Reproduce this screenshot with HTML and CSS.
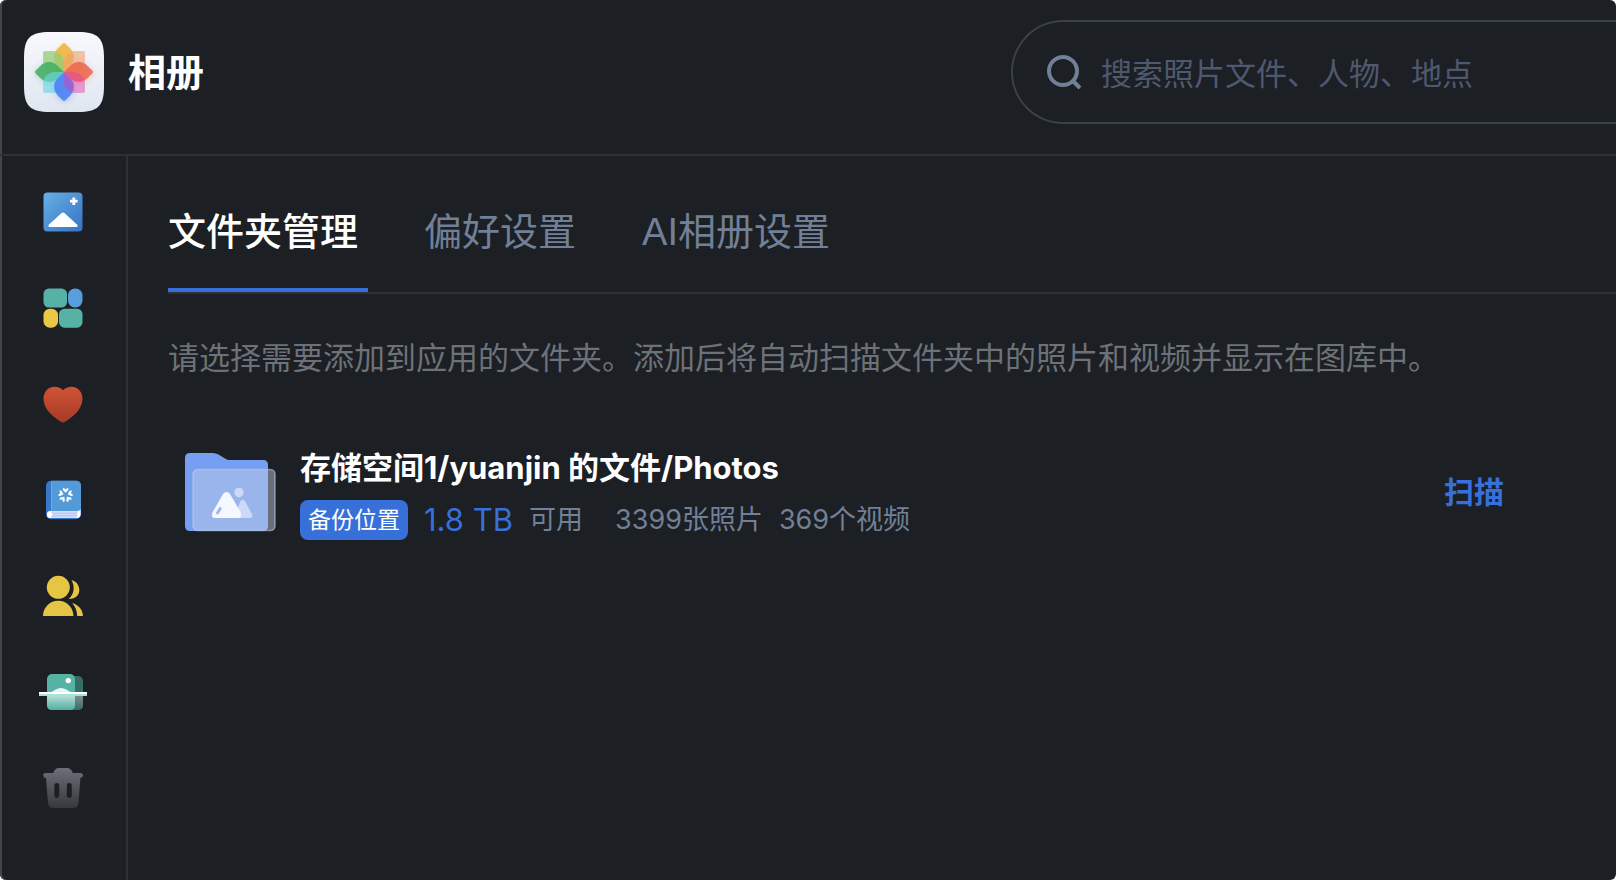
FILE: index.html
```
<!DOCTYPE html>
<html lang="zh-CN">
<head>
    <meta charset="UTF-8">
    <meta name="viewport" content="width=device-width, initial-scale=1">
    <title>相册</title>
    <link rel="stylesheet" href="styles.css">
</head>
<body>
<div class="window">
    <header class="header">
        <svg class="logo" viewBox="0 0 80 80" aria-hidden="true">
            <defs>
                <linearGradient id="logoBg" x1="0" y1="0" x2="0" y2="1">
                    <stop offset="0" stop-color="#f8f9fe"/>
                    <stop offset="1" stop-color="#dfe6f0"/>
                </linearGradient>
                <filter id="glow" x="-30%" y="-30%" width="160%" height="160%">
                    <feGaussianBlur stdDeviation="3"/>
                </filter>
                <path id="petal" d="M0 0H-9A12 12 0 0 1-21-12V-19Q-21-21-19-21H-12A12 12 0 0 1 0-9Z"/>
            </defs>
            <path fill="url(#logoBg)" d="M0 26C0 6 6 0 26 0H54C74 0 80 6 80 26V54C80 74 74 80 54 80H26C6 80 0 74 0 54Z"/>
            <g transform="translate(40 41)" filter="url(#glow)" opacity=".4">
                <use href="#petal" transform="rotate(45)" fill="#f5c56a"/>
                <use href="#petal" transform="rotate(135)" fill="#f2785c"/>
                <use href="#petal" transform="rotate(225)" fill="#5580f5"/>
                <use href="#petal" transform="rotate(315)" fill="#4cb56c"/>
            </g>
            <g transform="translate(40 40)">
                <use href="#petal" transform="rotate(45)" fill="#eebb52"/>
                <use href="#petal" fill="#92cd78" opacity=".75"/>
                <use href="#petal" transform="rotate(90)" fill="#f0a06c" opacity=".6"/>
                <use href="#petal" transform="rotate(315)" fill="#43ae62" opacity=".85"/>
                <use href="#petal" transform="rotate(270)" fill="#6bd6e4" opacity=".65"/>
                <use href="#petal" transform="rotate(135)" fill="#ee684f" opacity=".88"/>
                <use href="#petal" transform="rotate(225)" fill="#4a7cf5" opacity=".85"/>
                <use href="#petal" transform="rotate(180)" fill="#e03ca8" opacity=".45"/>
            </g>
        </svg>
        <h1 class="title">相册</h1>
        <label class="search">
            <svg class="search-icon" viewBox="0 0 36 36" aria-hidden="true">
                <circle cx="16" cy="17" r="14"/>
                <path d="M26 27L33 34"/>
            </svg>
            <input class="search-input" type="text" placeholder="搜索照片文件、人物、地点" aria-label="搜索">
        </label>
    </header>

    <div class="body">
        <nav class="sidebar">
            <a href="#gallery" aria-label="图库">
                <svg viewBox="0 0 48 48">
                    <defs>
                        <linearGradient id="blueGrad" x1="0" y1="0" x2="1" y2="1">
                            <stop offset="0" stop-color="#68b0e6"/>
                            <stop offset="1" stop-color="#3672c2"/>
                        </linearGradient>
                    </defs>
                    <rect x="4.5" y="4.5" width="39" height="39" rx="4" fill="url(#blueGrad)"/>
                    <path d="M22.4 25.2Q24 23.8 25.6 25.2L38 36.5Q39.6 39 37 39H11Q8.4 39 10 36.5Z" fill="#fff"/>
                    <path d="M34.8 9.5V17M31 13.2H38.6" stroke="#fff" stroke-width="2.8"/>
                </svg>
            </a>
            <a href="#albums" aria-label="相册">
                <svg viewBox="0 0 48 48">
                    <rect x="4.5" y="4.5" width="23.5" height="19" rx="5.5" fill="#56b2a4"/>
                    <rect x="29" y="4.5" width="14.5" height="19" rx="7" fill="#589edc"/>
                    <rect x="4.5" y="24.7" width="14.5" height="19" rx="6.5" fill="#e8c846"/>
                    <rect x="20" y="24.7" width="23.5" height="19" rx="5.5" fill="#56b2a4"/>
                </svg>
            </a>
            <a href="#favorites" aria-label="收藏">
                <svg viewBox="0 0 48 48">
                    <defs>
                        <linearGradient id="redGrad" x1="0" y1="0" x2="0" y2="1">
                            <stop offset="0" stop-color="#d05336"/>
                            <stop offset="1" stop-color="#a53a26"/>
                        </linearGradient>
                    </defs>
                    <path fill="url(#redGrad)" d="M24 10.3C26 8 29 6.7 32.5 6.7C39 6.7 43.5 12 43.5 18.5C43.5 29.5 34 37 25.2 42.2Q24 43 22.8 42.2C14 37 4.5 29.5 4.5 18.5C4.5 12 9 6.7 15.5 6.7C19 6.7 22 8 24 10.3Z"/>
                </svg>
            </a>
            <a href="#memories" aria-label="回忆">
                <svg viewBox="0 0 48 48">
                    <rect x="7" y="4.7" width="35" height="38.5" rx="5" fill="#3878c6"/>
                    <path d="M13 4.7H37Q42 4.7 42 9.7V35H13Z" fill="#529ad8"/>
                    <path d="M12.6 5V35" stroke="#74aee4" stroke-width="1"/>
                    <path d="M41.5 33.5V38Q41.5 42 37.5 42H11.5A3.5 3.5 0 0 1 11.5 35H38Q41 35 41.5 33.5Z" fill="#d4defc"/>
                    <path d="M12 37.3H38M12 39.8H38" stroke="#b0c2f4" stroke-width="1"/>
                    <path d="M11.5 35A3.5 3.5 0 0 0 11.5 42L13.5 38.5Z" fill="#fff"/>
                    <path d="M41.5 33.5V38Q41.5 42 37.5 42L39 35Q41 34.5 41.5 33.5Z" fill="#fff"/>
                    <g transform="translate(26.6 19)" fill="#fff">
                        <path id="leaf" d="M0-2.2L-2.9-5.2L-2.3-7.4L0-5.6L2.3-7.4L2.9-5.2Z"/>
                        <use href="#leaf" transform="rotate(72)"/>
                        <use href="#leaf" transform="rotate(144)"/>
                        <use href="#leaf" transform="rotate(216)"/>
                        <use href="#leaf" transform="rotate(288)"/>
                    </g>
                </svg>
            </a>
            <a href="#people" aria-label="人物">
                <svg viewBox="0 0 48 48" fill="#e6c444">
                    <circle cx="19.3" cy="15.3" r="11.5"/>
                    <path d="M4 44A15.2 15.3 0 0 1 34.4 44Z"/>
                    <path d="M32.5 8C37.5 9.5 40.3 13.3 40.3 18C40.3 23.5 36 27.3 29.7 27C35.5 22 36 14.5 32.5 8Z"/>
                    <path d="M33.3 31C39.5 33 43.5 37 44 44H38.2C38 39 36.5 34.8 33.3 31Z"/>
                </svg>
            </a>
            <a href="#scan" aria-label="扫描">
                <svg viewBox="0 0 48 48">
                    <defs>
                        <linearGradient id="scanGrad" x1="0" y1="0" x2="0" y2="1">
                            <stop offset="0" stop-color="#b4ded6"/>
                            <stop offset="1" stop-color="#50ae9e"/>
                        </linearGradient>
                        <linearGradient id="scanBack" x1="0" y1="0" x2="0" y2="1">
                            <stop offset="0" stop-color="#7c8c8c"/>
                            <stop offset="1" stop-color="#386c66"/>
                        </linearGradient>
                    </defs>
                    <rect x="24" y="8" width="20" height="34" rx="5" fill="#386c66"/>
                    <path d="M24 28H44V37Q44 42 39 42H24Z" fill="url(#scanBack)"/>
                    <rect x="8" y="6" width="28" height="36" rx="5" fill="#56b2a4"/>
                    <path d="M8 28H36V37Q36 42 31 42H13Q8 42 8 37Z" fill="url(#scanGrad)"/>
                    <path d="M10 24.5C15 24 17 20 22 20S29 24 34 24.5Z" fill="#eaf6f4"/>
                    <circle cx="29.3" cy="12.6" r="2.7" fill="#fff"/>
                    <path d="M0 24H48V26H0Z" fill="#fff"/>
                    <path d="M0 26H48V28H0Z" fill="#a6e4da"/>
                </svg>
            </a>
            <a href="#trash" aria-label="回收站">
                <svg viewBox="0 0 48 48">
                    <defs>
                        <linearGradient id="trashGrad" x1="0" y1="0" x2="0" y2="1">
                            <stop offset="0" stop-color="#6c6f78"/>
                            <stop offset="1" stop-color="#38393e"/>
                        </linearGradient>
                    </defs>
                    <path fill="url(#trashGrad)" fill-rule="evenodd" d="M14.3 9C15 6 17 4 20 4H28C31 4 33 6 33.7 9H41.5A2.5 2.5 0 0 1 41.4 14L39.5 39Q39 44 34 44H14.5Q9.5 44 9 39L7 14A2.5 2.5 0 0 1 6.5 9ZM15.3 21.5V31.5A2.5 2.5 0 0 0 20.3 31.5V21.5A2.5 2.5 0 0 0 15.3 21.5ZM27.8 21.5V31.5A2.5 2.5 0 0 0 32.8 31.5V21.5A2.5 2.5 0 0 0 27.8 21.5Z"/>
                </svg>
            </a>
        </nav>

        <main class="content">
            <div class="tabs" role="tablist">
                <button class="tab active" role="tab" aria-selected="true">文件夹管理</button>
                <button class="tab" role="tab" aria-selected="false">偏好设置</button>
                <button class="tab" role="tab" aria-selected="false">AI相册设置</button>
            </div>
            <p class="hint">请选择需要添加到应用的文件夹。添加后将自动扫描文件夹中的照片和视频并显示在图库中。</p>

            <div class="folder">
                <svg class="folder-icon" viewBox="0 0 92 80" aria-hidden="true">
                    <path fill="#769ff1" d="M6 1H29Q32 1 34.5 2.5L41 6.5Q43.5 8 46 8H79Q84 8 84 13V74Q84 79 79 79H6Q1 79 1 74V6Q1 1 6 1Z"/>
                    <rect x="9" y="17.5" width="82" height="61" rx="4.5" fill="#c4d0e8" fill-opacity=".46" stroke="#c0cce4" stroke-opacity=".55" stroke-width="1.6"/>
                    <path fill="#cbdafa" d="M56.5 49Q58.7 46.5 61 49L68 62Q69.5 66 66 66H50Z"/>
                    <circle cx="55" cy="40.5" r="4.7" fill="#cbdafa"/>
                    <path fill="#f5f8ff" d="M39 42Q42.5 38 46 42L56.5 60Q58.5 66 54 66H31Q26.5 66 28.5 60.5Z"/>
                    <path d="M36.2 56.5L33.5 61" stroke="#9db8f4" stroke-width="3" stroke-linecap="round"/>
                </svg>
                <div class="folder-info">
                    <h2 class="folder-name">存储空间1/yuanjin 的文件/Photos</h2>
                    <div class="folder-meta">
                        <span class="badge">备份位置</span>
                        <span class="size">1.8 TB</span>
                        <span>可用</span>
                        <span class="photos">3399张照片</span>
                        <span>369个视频</span>
                    </div>
                </div>
                <button class="scan-button">扫描</button>
            </div>
        </main>
    </div>
</div>
</body>
</html>
```
FILE: styles.css
```
* {
    box-sizing: border-box;
}
body {
    margin: 0;
    background: #fff;
    font-family: Inter, "Noto Sans CJK SC", sans-serif;
    color: #718096;
}
h1, h2, p {
    margin: 0;
}
button {
    padding: 0;
    border: none;
    background: none;
    font-family: inherit;
    cursor: pointer;
}
svg {
    display: block;
    flex-shrink: 0;
}
.window {
    display: flex;
    flex-direction: column;
    min-height: 100vh;
    overflow: hidden;
    background: #1c1f24;
    border-radius: 6px;
    box-shadow: inset 2px 0 #424549;
}
.header {
    display: flex;
    align-items: flex-start;
    padding: 20px 0 30px 24px;
    border-bottom: 2px solid #2d3035;
}
.logo {
    width: 80px;
    height: 80px;
    margin-top: 12px;
}
.title {
    margin: 24px 0 0 24px;
    font-size: 38px;
    line-height: 56px;
    color: #fff;
}

/* search box runs off the right edge of the window */
.search {
    display: flex;
    align-items: center;
    gap: 18px;
    width: 38%;
    height: 104px;
    margin-left: auto;
    padding-left: 34px;
    border: 2px solid #3b4149;
    border-right: none;
    border-radius: 52px 0 0 52px;
}
.search-icon {
    width: 36px;
    height: 36px;
    fill: none;
    stroke: #718096;
    stroke-width: 4;
}
.search-input {
    flex: 1;
    min-width: 0;
    padding: 4px 0 0;
    border: none;
    outline: none;
    background: none;
    font-family: inherit;
    font-size: 31px;
    line-height: 48px;
    color: #fff;
}
.search-input::placeholder {
    color: #4e5970;
    opacity: 1;
}
.body {
    flex: 1;
    display: flex;
}
.sidebar {
    display: flex;
    flex-direction: column;
    align-items: center;
    gap: 48px;
    width: 128px;
    padding: 32px 0;
    border-right: 2px solid #2d3035;
}
.sidebar svg {
    width: 48px;
    height: 48px;
}
.content {
    flex: 1;
    min-width: 0;
    padding: 44px 0 0 40px;
}
.tabs {
    display: flex;
    gap: 56px;
    border-bottom: 2px solid #2d3035;
}
.tab {
    padding: 6px 10px 30px 0;
    border-bottom: 4px solid transparent;
    font-family: "Liberation Sans", "Noto Sans CJK SC", sans-serif;
    font-size: 38px;
    line-height: 52px;
    color: #718096;
}
.tab.active {
    border-color: #3870da;
    font-weight: 500;
    color: #fff;
}
.hint {
    margin-top: 40px;
    font-size: 31px;
    line-height: 48px;
    color: #6d7278;
}
.folder {
    display: flex;
    align-items: center;
    margin-top: 62px;
    padding: 0 112px 0 16px;
}
.folder-icon {
    width: 92px;
    height: 80px;
}
.folder-info {
    flex: 1;
    margin-left: 24px;
}
.folder-name {
    font-size: 31px;
    line-height: 48px;
    font-weight: 700;
    color: #fff;
}
.folder-meta {
    display: flex;
    align-items: center;
    gap: 16px;
    margin-top: 8px;
    font-size: 27px;
    line-height: 40px;
}
.badge {
    padding: 0 8px;
    border-radius: 8px;
    background: #3870da;
    font-size: 23px;
    color: #fff;
}
.size {
    font-size: 31px;
    color: #3870da;
}
.photos {
    margin-left: 16px;
}
.scan-button {
    font-size: 30px;
    line-height: 48px;
    font-weight: 700;
    color: #3870da;
}
```
